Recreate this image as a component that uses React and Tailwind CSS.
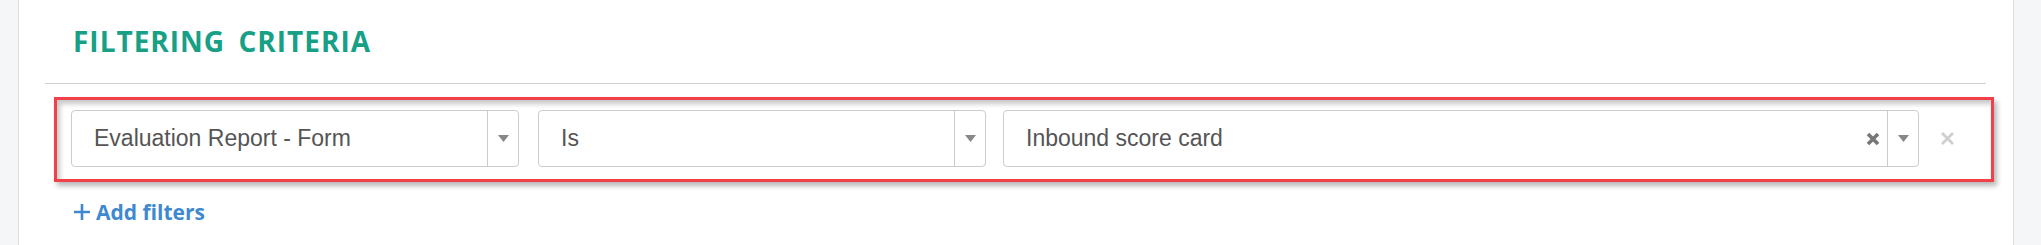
function Caret() {
  return (
    <svg width="11" height="7" viewBox="0 0 11 7" className="block">
      <path d="M0 0 H11 L5.5 7 Z" fill="#888" />
    </svg>
  )
}

function Select({ value, width, clearable }) {
  return (
    <div
      className={`flex h-[57px] items-stretch rounded-[4px] border border-[#ccc] bg-white ${width}`}
    >
      <div className="flex flex-1 items-center pl-[22px] font-['Liberation_Sans',Arial,sans-serif] text-[23px] text-[#555]">
        {value}
      </div>
      {clearable && (
        <div className="flex w-[28px] items-center justify-center">
          <svg width="14" height="14" viewBox="0 0 14 14">
            <path d="M2 2 L12 12 M12 2 L2 12" stroke="#777" strokeWidth="3.6" />
          </svg>
        </div>
      )}
      <div className="flex w-[31px] items-center justify-center border-l border-[#ccc]">
        <Caret />
      </div>
    </div>
  )
}

export default function App() {
  return (
    <div className="flex h-[245px] w-full overflow-hidden bg-[#f5f6f8]">
      <div className="w-[19px] shrink-0 border-r border-[#dcdde0]" />

      {/* main card */}
      <div className="flex-1 bg-white">
        <h2 className="pl-[54px] pt-[22px] font-['Open_Sans',sans-serif] text-[28px] font-bold uppercase leading-[38px] tracking-[1px] text-[#17a086] [word-spacing:5px]">
          Filtering Criteria
        </h2>

        <div className="ml-[26px] mr-[27px] mt-[23px] h-px bg-[#cfcfcf]" />

        <div className="ml-[35px] mr-[19px] mt-[13px] border-[3px] border-[#f0404a] pb-[12px] pl-[14px] pr-[16px] pt-[10px] shadow-[3px_4px_5px_rgba(0,0,0,0.28),inset_3px_4px_5px_rgba(0,0,0,0.22)]">
          <div className="flex items-center">
            <Select value="Evaluation Report - Form" width="w-[448px]" />
            <div className="w-[19px]" />
            <Select value="Is" width="w-[448px]" />
            <div className="w-[17px]" />
            <Select value="Inbound score card" width="flex-1" clearable />
            <button className="flex w-[56px] items-center justify-center">
              <svg width="15" height="15" viewBox="0 0 15 15">
                <path d="M2 2 L13 13 M13 2 L2 13" stroke="#cfcfcf" strokeWidth="2.8" />
              </svg>
            </button>
          </div>
        </div>

        <a className="ml-[54px] mt-[15px] flex items-center gap-[5px] font-['Open_Sans',sans-serif] text-[21px] font-bold leading-[30px] text-[#3f89cf]">
          <svg width="18" height="18" viewBox="0 0 18 18">
            <path d="M9 1 V17 M1 9 H17" stroke="#3f89cf" strokeWidth="2.6" />
          </svg>
          Add filters
        </a>
      </div>

      <div className="w-[28px] shrink-0 border-l border-[#dcdde0]" />
    </div>
  )
}
